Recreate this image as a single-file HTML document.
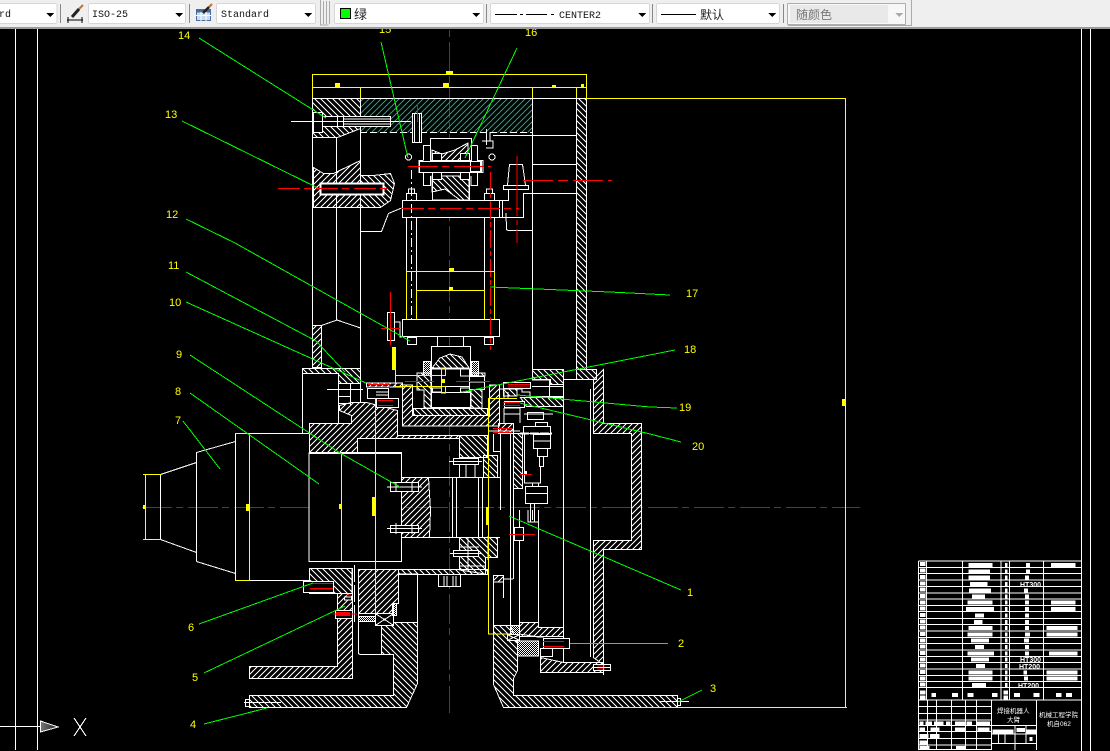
<!DOCTYPE html>
<html><head><meta charset="utf-8"><style>
html,body{margin:0;padding:0;background:#000;width:1110px;height:751px;overflow:hidden}
svg{display:block;position:absolute;left:0;top:0}
.w{fill:none;stroke:#fff;stroke-width:1}
.h{stroke:#fff;stroke-width:1;fill:url(#ha)}
.b{stroke:#fff;stroke-width:1;fill:url(#hb)}
.d{stroke:#fff;stroke-width:1;fill:url(#hd)}
.k{stroke:#fff;stroke-width:1;fill:#000}
.y{fill:none;stroke:#ff0;stroke-width:1}
.g{fill:none;stroke:#0f0;stroke-width:1}
.r{fill:none;stroke:#f00;stroke-width:1}
.l{fill:#ff0;font:11px "Liberation Sans",sans-serif}
.tm{font:10px "Liberation Mono",monospace;fill:#111}
.tc{font:13px "Liberation Sans","WenQuanYi Zen Hei",sans-serif;fill:#222}
.ts{font:bold 7px "Liberation Sans",sans-serif;fill:#fff}
.tz{font:6.5px "Liberation Sans","Noto Sans CJK SC",sans-serif;fill:#fff}
</style></head><body>
<svg width="1110" height="751" viewBox="0 0 1110 751" shape-rendering="crispEdges">
<defs>
<pattern id="ha" width="6" height="6" patternUnits="userSpaceOnUse"><path d="M0 6L6 0M-1 1L1 -1M5 7L7 5" stroke="#fff" fill="none"/></pattern>
<pattern id="hb" width="6" height="6" patternUnits="userSpaceOnUse"><path d="M0 0L6 6M-1 5L1 7M5 -1L7 1" stroke="#fff" fill="none"/></pattern>
<pattern id="hg" width="6" height="6" patternUnits="userSpaceOnUse"><path d="M0 6L6 0M-1 1L1 -1M5 7L7 5" stroke="#1f9c7c" fill="none"/></pattern>
<pattern id="hd" width="2" height="2" patternUnits="userSpaceOnUse"><rect width="1" height="1" fill="#fff"/><rect x="1" y="1" width="1" height="1" fill="#fff"/></pattern>
<linearGradient id="ucs" x1="0" x2="1" y1="0" y2="0"><stop offset="0" stop-color="#777"/><stop offset="1" stop-color="#222"/></linearGradient>
</defs>
<rect width="1110" height="751" fill="#000"/>

<!-- drawing frame -->
<path class="w" d="M15.5 29V750M37.5 29V750M1081.5 29V751M1090.5 29V751"/>

<!-- red centre lines -->
<path d="M142 507.5H860" fill="none" stroke="#e00000" stroke-dasharray="30 4 7 5"/>
<path d="M449.5 -4V713" fill="none" stroke="#e00000" stroke-dasharray="30 4 7 5"/>

<!-- top hatch -->
<polygon class="b" points="312.5,98.5 360.5,98.5 360.5,128.5 337.5,137.5 312.5,137.5"/>
<rect x="360.5" y="98.5" width="172" height="34" fill="url(#hg)"/>
<path d="M360 98.5H532M360 132.5H532" fill="none" stroke="#fff" stroke-dasharray="7 3"/>
<polygon class="b" points="576.5,98.5 586.5,98.5 586.5,369.5 576.5,369.5"/>
<path class="w" d="M312.5 98.5V368M360.5 98.5V402M532.5 98.5V370M336.5 137V320M312.5 98.5H586.5"/>
<rect class="k" x="313.5" y="112.5" width="9" height="20"/>
<rect class="k" x="322.5" y="116.5" width="68" height="10"/>
<path class="w" d="M291 121.5H411M337.5 116V127M343.5 116V127M343 119H390M343 124H390"/>
<rect class="k" x="412.5" y="113.5" width="9" height="29"/>
<path class="w" d="M414.5 113V142M419.5 113V142"/>
<path class="r" d="M417.5 104V122"/>

<!-- upper mechanism -->
<polygon class="h" points="313.5,167.5 323.5,173.5 333.5,173.5 360.5,160.5 360.5,207.5 313.5,207.5"/>
<polygon class="b" points="360.5,175.5 373.5,175.5 390.5,173.5 394.5,183.5 390.5,200.5 380.5,207.5 360.5,207.5"/>
<rect x="320.5" y="183.5" width="63" height="11" fill="#000" stroke="#fff" stroke-width="2"/>
<path class="w" d="M360.5 231.5H381.5L388.5 213.5L401.5 208"/>
<path class="w" d="M423.5 145.5H430.5V138.5H471.5V145.5H477.5M423.5 145V160.5M423 160.5H419V172.5H423.5M423.5 172.5V185.5H430.5V176M471 176V185.5H477.5V172.5H483V160.5H477.5V145.5"/>
<rect class="k" x="430.5" y="138.5" width="41" height="22"/>
<polygon class="h" points="432,161 432,150 442,154 455,150 468,143 468,161"/>
<rect class="k" x="419.5" y="161.5" width="62" height="11"/>
<rect class="k" x="470.5" y="161.5" width="10" height="10" stroke-width="2"/>
<rect class="k" x="432.5" y="172.5" width="37" height="27.5"/>
<polygon class="b" points="432,176 432,192 445,189 460,200 469,200 469,176"/>
<rect class="k" x="432.5" y="153.5" width="9" height="7"/><rect class="k" x="460.5" y="153.5" width="9" height="7"/>
<rect class="k" x="432.5" y="172.5" width="9" height="7"/><rect class="k" x="460.5" y="172.5" width="9" height="7"/>
<circle cx="408.5" cy="157" r="3" class="k"/><circle cx="492" cy="157" r="3" class="k"/>
<path class="w" d="M486.5 129V145M482 141H493V148H486M493 135.5H576.5M490 132V141"/>
<rect class="k" x="402.5" y="200.5" width="97" height="17"/>
<rect class="k" x="406.5" y="193.5" width="10" height="7"/><rect class="k" x="484.5" y="193.5" width="10" height="7"/>
<path class="w" d="M408.5 193V189H414.5V193M486.5 193V189H492.5V193"/>
<path class="w" d="M406.5 218V319M416.5 218V319M484.5 218V319M494.5 218V319"/>
<path d="M411.5 170V345" fill="none" stroke="#fff" stroke-dasharray="9 3 2 3"/>
<path class="w" d="M507.5 185L509.5 164.5H522.5L525.5 185"/>
<rect class="k" x="503.5" y="185.5" width="25" height="4"/>
<path class="w" d="M501.5 200.5H508.5V189M501.5 200.5V217.5H523.5V193.5H576M499 205H501M499 213H501M506 213L506.5 229.5L508 230.5H532.5M532.5 164.5H576"/>
<rect class="k" x="499.5" y="200.5" width="3" height="17"/>

<!-- lower bar and plate -->
<rect class="k" x="402.5" y="319.5" width="97" height="17"/>
<rect class="k" x="407.5" y="337.5" width="9" height="7"/><rect class="k" x="484.5" y="337.5" width="9" height="7"/>
<rect class="k" x="387.5" y="312.5" width="7" height="28"/>
<path class="w" d="M394 322H400V337H402M437.5 337V346M463.5 337V346"/>
<rect class="k" x="431.5" y="346.5" width="39" height="61"/>
<polygon class="b" points="432,368 440,358 450,354 462,357 469,368"/>
<rect class="d" x="423.5" y="361.5" width="7" height="14"/><rect class="d" x="471.5" y="361.5" width="7" height="14"/>
<polygon class="b" points="417,373 431,373 431,408 424,408 424,390 417,390"/>
<polygon class="b" points="471,373 485,373 485,376 471,376"/>
<polygon class="b" points="471,389 482,389 482,408 471,408"/>
<polygon class="h" points="402.5,385 412.5,385 412.5,415.5 489.5,415.5 489.5,385 499.5,385 499.5,426 402.5,426"/>
<polygon class="b" points="413.5,408.5 487.5,408.5 487.5,415.5 413.5,415.5"/>
<path class="w" d="M432 386.5H470M432 392.5H470M432 369H470M431 407.5H471"/>
<rect class="k" x="469.5" y="376.5" width="15" height="13"/><path class="w" d="M469 382H484"/>
<rect class="k" x="460.5" y="369" width="9" height="7"/><rect class="k" x="460.5" y="388" width="9" height="4"/>
<rect class="k" x="432.5" y="388" width="9" height="4"/>

<!-- left lower body -->
<polygon class="h" points="312.5,367.5 312.5,325.5 321.5,325.5 321.5,367.5"/>
<path class="w" d="M321.5 325.5L337 320L360.5 328"/>
<polygon class="b" points="302.5,368.5 360.5,368.5 360.5,383.5 338.5,383.5 338.5,373.5 302.5,373.5"/>
<path class="w" d="M302.5 373V433M290 433.5H309M338.5 383V423M327 389.5H363M338 396.5H350M338 403.5H350M350.5 383V405"/>
<polygon class="h" points="366.5,383 402.5,383 402.5,387 366.5,387"/>
<rect x="368" y="384" width="22" height="1" fill="#f00"/><rect x="368" y="387" width="22" height="1" fill="#f00"/>
<rect class="k" x="367.5" y="388.5" width="21" height="10"/>
<path class="w" d="M376 392H388M376 395H388"/>
<polygon class="h" points="309.5,423.5 351.5,423.5 351.5,415.5 339.5,410.5 339.5,405.5 351.5,402.5 366.5,402.5 397.5,410.5 397.5,435.5 459.5,435.5 459.5,438.5 357.5,438.5 357.5,453.5 309.5,453.5"/>
<rect class="k" x="376.5" y="398.5" width="22" height="9"/>
<rect x="378" y="400" width="15" height="1" fill="#f00"/><rect x="378" y="405" width="15" height="1" fill="#f00"/>
<polygon class="b" points="459.5,435.5 487.5,435.5 487.5,457.5 459.5,457.5"/>
<polygon class="b" points="483.5,455.5 497.5,455.5 497.5,477.5 483.5,477.5"/>
<rect class="k" x="459.5" y="457.5" width="24" height="20"/>
<path class="k" d="M453.5 458.5H478.5V464.5H453.5Z"/><path class="w" d="M449 461.5H482M466 465V477M475 465V477"/>
<path d="M309 453H401.5V561.5H309Z" fill="#000" stroke="#fff" stroke-width="1"/>
<path d="M309 453H402" stroke="#fff" stroke-width="2" fill="none"/>
<path class="w" d="M309.5 453V433.5M401.5 477.5H500M401.5 537.5H500M452.5 477V537M456.5 477V537M478.5 477V537M482.5 477V537"/>
<polygon class="h" points="401.5,477.5 428.5,477.5 430.5,510 429.5,537.5 401.5,537.5"/>
<rect class="k" x="390.5" y="482.5" width="28" height="9"/>
<path class="w" d="M387 487H422M396 482V491M412 482V491"/>
<rect class="k" x="390.5" y="525.5" width="28" height="7"/>
<path class="w" d="M387 528.5H422M396 523V534M412 523V534"/>
<polygon class="b" points="459.5,537.5 497.5,537.5 497.5,557.5 485.5,557.5 485.5,574 459.5,570"/>
<rect class="k" x="453.5" y="550.5" width="25" height="6"/>
<path class="w" d="M450 553.5H482M468 537V570M459 547H479M459 566H485"/>

<!-- motor & cone -->
<path class="w" d="M235.5 433.5V580.5H309M235.5 433.5H309M160.5 474V539M196.5 452V561.5M160.5 474.5L196.5 462.5M196.5 452.5L235.5 441.5M160.5 539.5L196.5 552.5M196.5 561.5L235.5 573.5M309 561.5H402"/>
<!-- lower left assembly -->
<polygon class="b" points="309.5,568.5 352.5,568.5 352.5,593.5 309.5,593.5"/>
<polygon class="h" points="337.5,593.5 352.5,593.5 352.5,678.5 249.5,678.5 249.5,666.5 337.5,666.5"/>
<polygon class="b" points="381.5,622.5 417.5,622.5 417.5,683.5 406.5,707.5 249.5,707.5 249.5,695.5 393.5,695.5 393.5,654.5 381.5,654.5"/>
<polygon class="h" points="358.5,569.5 398.5,569.5 398.5,603.5 393.5,603.5 393.5,613.5 358.5,613.5"/>
<polygon class="b" points="398.5,569.5 487.5,569.5 487.5,574.5 398.5,574.5"/>
<path class="w" d="M417.5 574V622M398.5 574H417.5M358.5 613V653.5L360 654.5H381.5"/>
<path d="M354.5 565V622" stroke="#fff" fill="none" stroke-dasharray="17 3"/>
<path class="w" d="M352 569V593"/>
<rect class="d" x="358.5" y="616.5" width="17" height="5"/>
<rect class="k" x="375.5" y="613.5" width="18" height="12"/><path class="w" d="M376 614L393 625M393 614L376 625"/>
<rect class="d" x="392.5" y="603.5" width="4" height="12"/>
<rect class="k" x="303.5" y="581.5" width="30" height="11"/>
<path d="M313 583.5H333" stroke="#f00" fill="none"/><path d="M310 588.5H333" stroke="#f00" fill="none" stroke-width="1.5"/>
<rect class="k" x="335.5" y="610.5" width="17" height="8"/>
<rect x="336" y="612" width="14" height="4" fill="#f00"/><path d="M333 614H357" stroke="#f00" fill="none"/>
<rect class="k" x="344.5" y="597" width="7" height="3"/><path d="M346 595H351" stroke="#f00" fill="none"/>
<rect class="k" x="438.5" y="574.5" width="22" height="12"/>
<path class="w" d="M444 576V586M447 576V586M453 576V586M456 576V586"/>
<rect class="k" x="245.5" y="699.5" width="4" height="7"/><path class="w" d="M244 702.5H281"/>

<!-- right assembly -->
<polygon class="b" points="532.5,369.5 563.5,369.5 563.5,384.5 550.5,384.5 550.5,379.5 532.5,379.5"/>
<polygon class="b" points="576.5,369.5 596.5,369.5 596.5,379.5 576.5,379.5"/>
<polygon class="h" points="593.5,379.5 603.5,369.5 603.5,423.5 641.5,423.5 641.5,549.5 603.5,549.5 603.5,665 593.5,657.5 593.5,540.5 631.5,540.5 631.5,433.5 593.5,433.5"/>
<path class="w" d="M563.5 379V662M590.5 389V657M563 379.5H593M532 380H550M532 386.5H563M532 396.5H563M549.5 380V397"/>
<polygon class="b" points="520.5,397.5 563.5,397.5 563.5,406.5 526.5,406.5"/>
<polygon class="h" points="540.5,657.5 563.5,662.5 603.5,662.5 603.5,672.5 540.5,672.5"/>
<polygon class="b" points="493.5,625.5 510.5,625.5 517.5,643.5 517.5,670.5 513.5,678.5 513.5,695.5 677.5,695.5 677.5,707.5 503.5,707.5 493.5,684.5"/>
<polygon class="h" points="519.5,622.5 538.5,622.5 538.5,627.5 563.5,627.5 563.5,636.5 519.5,636.5"/>
<rect class="d" x="517.5" y="641" width="21" height="15"/>
<rect class="d" x="510.5" y="625.5" width="9" height="9"/>
<rect class="k" x="507.5" y="634.5" width="12" height="6"/><path class="w" d="M508 635L519 640M519 635L508 640"/>
<path class="w" d="M519.5 634L538 637H544M538.5 510V627M519.5 510V622M528 510V522H538M532.5 510V520"/>
<rect class="k" x="543.5" y="638.5" width="26" height="10"/>
<path d="M543 641.5H564M543 646.5H564" stroke="#f00" fill="none"/>
<rect class="k" x="540.5" y="648.5" width="12" height="8"/>
<rect class="k" x="593.5" y="664.5" width="17" height="6"/><path class="w" d="M592 667.5H611M603.5 663V675"/>
<path d="M597 666H605M597 669H605" stroke="#f00" fill="none"/>
<rect class="k" x="677.5" y="698.5" width="3" height="7"/><path class="w" d="M659 701.5H689"/>

<polygon class="b" points="503.5,388 517,388 517,396 503.5,396"/>
<rect class="k" x="503.5" y="382.5" width="27" height="6"/>
<path d="M508 384.5H530M508 387H530" stroke="#f00" fill="none" stroke-width="1"/>
<path class="w" d="M499.5 389H522V392H530V398M522 389V392M504 392V398M508 398V392"/>
<rect class="k" x="504.5" y="401.5" width="20" height="6"/>
<path d="M503 402.5H520M503 405.5H520" stroke="#f00" fill="none"/>
<path class="w" d="M504 408H520M504 408V423M520 408V423M504 414H520"/>
<polygon class="h" points="498.5,423.5 513.5,423.5 513.5,433.5 498.5,433.5"/>
<path d="M493 428.5H512M493 432.5H512" stroke="#f00" fill="none"/>
<path class="w" d="M489 431H520M500.5 434V510M510.5 433V625M513.5 488V579M522.5 433V488M524.5 433V483H540.5V466M493.5 434V451.5H500.5M493.5 575V625"/>
<polygon class="b" points="513.5,433.5 522.5,433.5 522.5,488.5 513.5,488.5"/>
<rect class="k" x="527.5" y="412.5" width="16" height="7"/>
<path class="w" d="M524 414H553"/>
<rect class="k" x="535.5" y="422.5" width="12" height="4"/>
<rect class="k" x="523.5" y="426.5" width="27" height="7"/>
<path d="M520 433.5H552" stroke="#fff" fill="none" stroke-width="2" stroke-dasharray="9 1"/>
<rect class="k" x="533.5" y="434.5" width="17" height="14"/>
<path class="w" d="M533 441H550"/>
<rect class="k" x="537.5" y="448.5" width="10" height="8"/>
<rect class="k" x="539.5" y="456.5" width="4" height="10"/>
<rect class="k" x="525.5" y="486.5" width="22" height="17"/>
<path class="w" d="M525 493.5H547M532.5 483V486M538.5 483V486M530.5 503V522M534.5 503V522"/>
<rect class="k" x="514.5" y="527.5" width="9" height="13"/>
<rect x="524" y="471" width="3" height="3" fill="#fff"/>
<path d="M520 474.5H532M509 534.5H535" stroke="#f00" fill="none"/>
<polygon class="h" points="493.5,575.5 503.5,575.5 503.5,582 493.5,582"/>
<path class="w" d="M503.5 579H513M503.5 582V598M488 536V560"/>

<!-- reds -->
<path class="r" stroke-dasharray="30 4 7 5" d="M408 166.5H491"/>
<path class="r" stroke-dasharray="22 4 7 5" d="M402 208.5H519"/>
<path class="r" stroke-dasharray="18 3 5 3" d="M490.5 172V350"/>
<path class="r" stroke-dasharray="60 4 5 4" d="M517 156V243"/>
<path class="r" stroke-dasharray="30 5 10 5" d="M523 180.5H612"/>
<path class="r" stroke-dasharray="22 4 7 5" d="M278 188.5H390"/>
<path class="r" d="M390.5 292V345M381 328.5H400"/>
<path class="r" d="M405 381.5H434M456 381.5H490"/>

<!-- yellow dims -->
<path class="y" d="M312 74.5H587M312 87.5H587M312.5 74V98M360.5 87V98M532.5 87V98M576.5 87V98M586.5 74V98M586 98.5H846M845.5 98V707.5M578 707.5H847"/>
<rect x="446" y="71" width="7" height="3" fill="#ff0"/><rect x="443" y="83" width="6" height="4" fill="#ff0"/>
<rect x="335" y="83" width="5" height="4" fill="#ff0"/><rect x="552" y="85" width="4" height="2" fill="#ff0"/><rect x="581" y="84" width="3" height="3" fill="#ff0"/>
<rect x="842" y="399" width="3" height="7" fill="#ff0"/>
<path class="y" d="M406.5 271.5H494.5M406.5 271V319M494.5 271V319M416.5 290.5H484.5M416.5 290V319M484.5 290V319"/>
<rect x="449" y="268" width="5" height="3" fill="#ff0"/><rect x="449" y="287" width="4" height="3" fill="#ff0"/>
<path class="y" d="M395.5 347V375.5H445.5V368M395.5 375.5V386.5H445.5V393H441.5V368H445.5"/>
<rect x="392" y="347" width="3" height="23" fill="#ff0"/><rect x="441" y="379" width="4" height="4" fill="#ff0"/>
<path class="y" d="M341.5 453V561M375.5 398V613M488.5 398V634H510M488.5 398.5H517"/>
<rect x="339" y="504" width="3" height="5" fill="#ff0"/><rect x="372" y="497" width="3" height="19" fill="#ff0"/><rect x="486" y="507" width="3" height="18" fill="#ff0"/>
<path class="y" d="M145.5 474V539M143 474.5H161M143 539.5H161M249.5 433V581M235 433.5H250M235 580.5H250"/>
<rect x="143" y="505" width="3" height="4" fill="#ff0"/><rect x="246" y="504" width="3" height="7" fill="#ff0"/>

<!-- green leaders -->
<path class="g" d="M199 38L326 118M182 121L318 188M381 42L408 158M517 48L465 158M186 219L235 243L410 341M186 272L316 341L345 372M186 302L366 383M190 355L340 453L400 487M190 393L319 484M183 421L220 469M199 624L313 583M204 673L345 606M204 724L267 708M678 702L702 690M570 643.5H668M509 516L681 590M490 287L610 292L670 295M462 392L675 350M517 395L650 407L677 408M520 403L650 434L681 442"/>

<!-- labels -->
<g shape-rendering="auto">
<text class="l" x="178" y="39">14</text><text class="l" x="165" y="118">13</text>
<text class="l" x="379" y="33">15</text><text class="l" x="525" y="36">16</text>
<text class="l" x="166" y="218">12</text><text class="l" x="168" y="269">11</text>
<text class="l" x="169" y="306">10</text><text class="l" x="176" y="358">9</text>
<text class="l" x="175" y="395">8</text><text class="l" x="175" y="424">7</text>
<text class="l" x="188" y="631">6</text><text class="l" x="192" y="681">5</text>
<text class="l" x="190" y="728">4</text><text class="l" x="710" y="692">3</text>
<text class="l" x="678" y="647">2</text><text class="l" x="687" y="596">1</text>
<text class="l" x="686" y="297">17</text><text class="l" x="684" y="353">18</text>
<text class="l" x="679" y="411">19</text><text class="l" x="692" y="450">20</text>
</g>

<!-- UCS icon -->
<path class="w" d="M0 726.5H40"/>
<polygon points="40.5,721 58,727 40.5,732" fill="url(#ucs)" stroke="#fff"/>
<path d="M74 718L86 736M86 718L74 736" stroke="#fff" fill="none"/>

<!-- title block -->
<g transform="translate(910 550) scale(.3333)" fill="none" stroke="#fff" stroke-width="3">
<path d="M25 33H514M25 52H514M25 71H514M25 90H514M25 110H514M25 129H514M25 147H514M25 166H514M25 185H514M25 205H514M25 224H514M25 243H514M25 262H514M25 281H514M25 300H514M25 319H514M25 338H514M25 357H514M25 376H514M25 395H514M25 413H514M25 450H514"/>
<path d="M25 33V600M50 33V450M157 33V450M273 33V450M298 33V450M400 33V450M514 33V600"/>
<path d="M25 470H245M25 490H245M25 510H245M25 527H245M25 545H245M25 565H245M25 585H245M25 598H245M52 450V598M80 450V598M125 450V598M167 450V598M200 450V598M245 450V600M380 450V600M245 527H380M245 552H380M245 580H380M265 552V580M285 552V580M315 527V600M348 527V580"/>
<g stroke-width="12">
<path d="M175 45H248M175 64H240M175 83H240M180 102H233M177 121H243M186 139H225M172 158H248M168 177H252M195 197H222M192 216H218M175 234H248M172 253H248M183 272H237M195 291H222M172 310H252M183 329H237M198 348H225M175 367H248M175 386H248M186 405H228"/>
<path d="M348 45H360M348 64H360M345 83H357M342 121H354M345 139H357M345 158H357M345 177H357M345 197H357M345 216H357M345 234H357M345 253H360M342 272H357M345 291H357M345 310H357M340 367H351M342 386H354"/>
<path d="M423 45H497M423 158H497M423 177H497M410 234H503M410 253H503M417 310H503M410 367H503M410 386H503"/>
<path d="M30 42H46M30 62H46M30 81H46M30 100H46M30 119H46M30 138H46M30 157H46M30 176H46M30 195H46M30 214H46M30 233H46M30 252H46M30 271H46M30 290H46M30 309H46M30 328H46M30 347H46M30 366H46M30 385H46M30 404H46"/>
<path d="M285 45H293M285 64H293M285 83H293M285 102H293M285 121H293M285 139H293M285 158H293M285 177H293M285 197H293M285 216H293M285 234H293M285 253H293M285 272H293M285 291H293M285 310H293M285 329H293M285 348H293M285 367H293M285 386H293M285 405H293"/>
<path d="M30 428H46M30 442H46M64 435H78M126 435H144M172 435H190M246 435H262M280 428H294M280 442H294M312 435H330M370 435H388M438 435H454M468 435H486"/>
<path d="M28 520H40M46 520H66M72 520H100M108 520H122M135 520H165M170 520H186M200 520H240M28 538H45M62 538H88M135 538H165M202 538H238M28 558H56M60 558H88M28 578H52M28 594H58M138 594H165M248 544H310M350 544H378M320 540H345M358 567H368"/>
</g>
</g>
<g shape-rendering="auto">
<text class="ts" x="1020" y="587">HT300</text>
<text class="ts" x="1020" y="662">HT300</text><text class="ts" x="1019" y="669">HT200</text><text class="ts" x="1018" y="688">HT200</text>
<text class="tz" x="997" y="713">焊接机器人</text><text class="tz" x="1007" y="722">大臂</text>
<text class="tz" x="1039" y="717">机械工程学院</text><text class="tz" x="1047" y="726">机自062</text>
</g>

<!-- toolbar -->
<rect x="0" y="0" width="1110" height="27" fill="#efefef"/>
<rect x="0" y="27" width="1110" height="2" fill="#9a9a9a"/>
<g fill="#fff" stroke="#d6d6d6">
<rect x="-5" y="3.5" width="62" height="20" rx="2"/><rect x="88.5" y="3.5" width="97" height="20" rx="2"/>
<rect x="216.5" y="3.5" width="99" height="20" rx="2"/><rect x="334.5" y="3.5" width="149" height="20" rx="2"/>
<rect x="490.5" y="3.5" width="159" height="20" rx="2"/><rect x="656.5" y="3.5" width="123" height="20" rx="2"/>
</g>
<path d="M60.5 4V23M189.5 4V23M486.5 4V23M652.5 4V23M783.5 4V23" stroke="#888" fill="none"/>
<path d="M320.5 0V25H328.5M323.5 1V24M329.5 1V24M326.5 1V24" stroke="#aaa" fill="none"/>
<rect x="787.5" y="3.5" width="118" height="21" rx="1" fill="#f7f7f7" stroke="#adadad"/>
<rect x="790" y="5" width="98" height="18" fill="#e9e9e9"/>
<path d="M911.5 0V25.5H788" stroke="#aaa" fill="none"/>
<g fill="#000">
<polygon points="46,13 54,13 50,17"/><polygon points="175,13 183,13 179,17"/><polygon points="304,13 312,13 308,17"/>
<polygon points="472,13 480,13 476,17"/><polygon points="638,13 646,13 642,17"/><polygon points="768,13 776,13 772,17"/>
</g>
<polygon points="895,13 903,13 899,17" fill="#aaa"/>
<rect x="340.5" y="8.5" width="10" height="10" fill="#0f0" stroke="#000"/>
<path d="M495 14.5H517M520 14.5H523M526 14.5H547M551 14.5H554M661 14.5H696" stroke="#000" fill="none"/>
<g shape-rendering="auto">
<text class="tm" x="-1" y="17">rd</text><text class="tm" x="92" y="17">ISO-25</text>
<text class="tm" x="221" y="17">Standard</text><text class="tm" x="559" y="18">CENTER2</text>
<text class="tc" x="354" y="19">绿</text><text class="tc" x="700" y="19" style="font-size:12px">默认</text>
<text class="tc" x="796" y="19" style="font-size:12px;fill:#777">随颜色</text>
<path d="M67 20H83" stroke="#000" fill="none"/>
<path d="M68 17V23M82 17V23" stroke="#000" fill="none"/>
<path d="M72 17L79 9" stroke="#222" stroke-width="3" fill="none"/><path d="M79 9L83 5" stroke="#b9743a" stroke-width="2" fill="none"/>
<rect x="196.5" y="9.5" width="14" height="11" fill="#c7dcf2" stroke="#4a6d9e"/>
<rect x="196.5" y="9.5" width="14" height="3" fill="#4a6d9e"/>
<path d="M196 15.5H211M201 12V21M206 12V21" stroke="#fff" fill="none"/>
<path d="M203 13L209 7" stroke="#222" stroke-width="2.5" fill="none"/><path d="M209 7L212 4" stroke="#b9743a" stroke-width="2" fill="none"/>
</g>
</svg>
</body></html>
